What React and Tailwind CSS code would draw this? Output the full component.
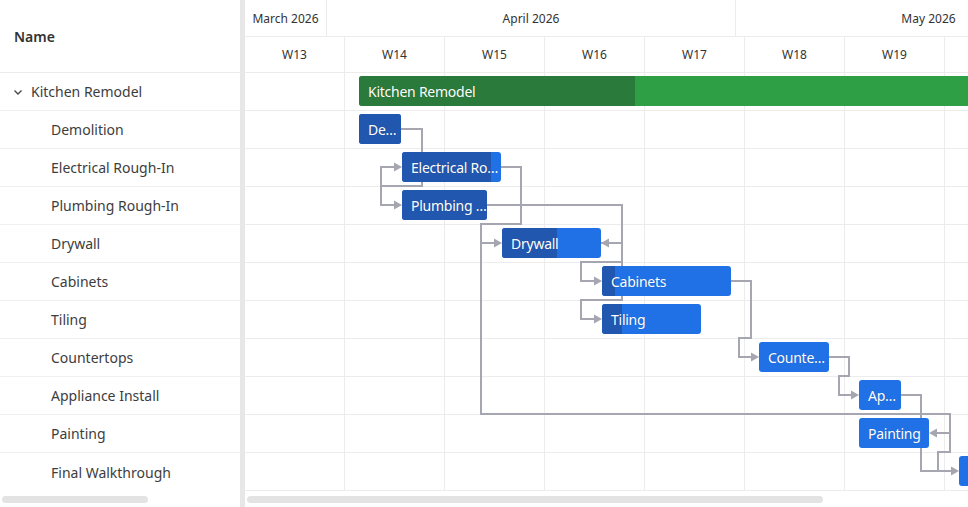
import { Fragment } from 'react'

const ORIGIN_X = 245
const ROW_H = 38

const rows = [
  { name: 'Kitchen Remodel', parent: true },
  { name: 'Demolition' },
  { name: 'Electrical Rough-In' },
  { name: 'Plumbing Rough-In' },
  { name: 'Drywall' },
  { name: 'Cabinets' },
  { name: 'Tiling' },
  { name: 'Countertops' },
  { name: 'Appliance Install' },
  { name: 'Painting' },
  { name: 'Final Walkthrough' },
]

// x / width in page pixels, progress in px from bar start
const bars = [
  { label: 'Kitchen Remodel', x: 359, w: 800, progress: 276, summary: true },
  { label: 'De…', x: 359, w: 42, progress: 42 },
  { label: 'Electrical Ro…', x: 402, w: 99, progress: 89 },
  { label: 'Plumbing …', x: 402, w: 85, progress: 85 },
  { label: 'Drywall', x: 502, w: 99, progress: 55 },
  { label: 'Cabinets', x: 602, w: 129, progress: 13 },
  { label: 'Tiling', x: 602, w: 99, progress: 20 },
  { label: 'Counte…', x: 759, w: 70, progress: 0 },
  { label: 'Ap…', x: 859, w: 42, progress: 0 },
  { label: 'Painting', x: 859, w: 70, progress: 0 },
  { label: '', x: 959, w: 42, progress: 0 },
]

const months = [
  { label: 'March 2026', w: 82 },
  { label: 'April 2026', w: 409 },
  { label: 'May 2026', w: 386 },
]

// last week column runs past the right edge, its label is out of view
const weeks = ['W13', 'W14', 'W15', 'W16', 'W17', 'W18', 'W19', '']

// connector lines, page coordinates
const links = [
  'M401 129 H422 V186 H381 V167 H396',
  'M381 186 V205 H396',
  'M501 167 H521 V224 H481 V243 H496',
  'M481 224 V414 H950 V433 H935',
  'M487 205 H622 V243 H607',
  'M601 243 H622 V262 H581 V281 H596',
  'M622 262 V300 H581 V319 H596',
  'M731 281 H751 V338 H739 V357 H753',
  'M829 357 H849 V376 H839 V395 H853',
  'M901 395 H921 V471 H953',
  'M950 433 V452 H938 V471',
]

const arrowsRight = [
  [402, 167], [402, 205], [502, 243], [602, 281], [602, 319], [759, 357], [859, 395], [959, 471],
]
const arrowsLeft = [
  [601, 243], [929, 433],
]

function Chevron() {
  return (
    <svg width="10" height="10" viewBox="0 0 10 10" className="text-[#444]">
      <path d="M1.5 3.5 L5 7 L8.5 3.5" fill="none" stroke="currentColor" strokeWidth="1.3" />
    </svg>
  )
}

function Bar({ bar, row }) {
  const light = bar.summary ? 'bg-[#2f9f46]' : 'bg-[#2071e6]'
  const dark = bar.summary ? 'bg-[#2a7a3b]' : 'bg-[#2257b0]'
  return (
    <div
      className={`absolute h-[30px] rounded-[3px] overflow-hidden ${light}`}
      style={{ left: bar.x - ORIGIN_X, top: row * ROW_H + 3, width: bar.w }}
    >
      <div className={`absolute inset-y-0 left-0 ${dark}`} style={{ width: bar.progress }} />
      <span className="relative flex h-full items-center pl-[9px] text-[14px] tracking-[-0.25px] text-white whitespace-nowrap [text-shadow:0_0_1px_rgba(0,0,0,0.25)]">
        {bar.label}
      </span>
    </div>
  )
}

export default function App() {
  return (
    <div className="flex h-[507px] w-[968px] overflow-hidden bg-white font-['Noto_Sans',sans-serif] text-[#333]">
      {/* grid side */}
      <div className="flex w-[240px] shrink-0 flex-col">
        <div className="flex h-[73px] items-center border-b border-[#ececec] px-[14px] text-[14px] font-semibold text-[#333]">
          Name
        </div>
        {rows.map((r) => (
          <div
            key={r.name}
            className={`flex h-[38px] items-center border-b border-[#f0f0f0] text-[14px] text-[#3d3d3d] ${r.parent ? 'pl-[13px]' : 'pl-[51px]'} ${r.name === 'Final Walkthrough' ? 'border-b-0' : ''}`}
          >
            {r.parent && (
              <span className="mr-[8px] flex items-center">
                <Chevron />
              </span>
            )}
            {r.name}
          </div>
        ))}
        <div className="flex flex-1 items-center px-[2px]">
          <div className="h-[7px] w-[146px] rounded-full bg-[#e3e3e3]" />
        </div>
      </div>

      {/* splitter */}
      <div className="w-[5px] shrink-0 bg-[#e7e7e7]" />

      {/* timeline */}
      <div className="flex min-w-0 flex-1 flex-col overflow-hidden">
        <div className="flex h-[37px] shrink-0 border-b border-[#ececec]">
          {months.map((m) => (
            <div
              key={m.label}
              className="flex shrink-0 items-center justify-center border-r border-[#ececec] pt-px text-[12px] text-[#333]"
              style={{ width: m.w }}
            >
              {m.label}
            </div>
          ))}
        </div>
        <div className="flex h-[36px] shrink-0 border-b border-[#ececec]">
          {weeks.map((w, i) => (
            <div
              key={i}
              className="flex w-[100px] shrink-0 items-center justify-center border-r border-[#ececec] text-[12px] text-[#333]"
            >
              {w}
            </div>
          ))}
        </div>

        <div className="relative h-[418px] shrink-0">
          {/* grid lines */}
          <div className="absolute inset-0 flex">
            {weeks.map((w, i) => (
              <div key={i} className="h-full w-[100px] shrink-0 border-r border-[#ececec]" />
            ))}
          </div>
          <div className="absolute inset-0 flex flex-col">
            {rows.map((r) => (
              <div key={r.name} className="h-[38px] shrink-0 border-b border-[#ececec]" />
            ))}
          </div>

          <svg
            className="absolute left-0 top-0"
            width="723"
            height="418"
            viewBox="245 73 723 418"
          >
            {links.map((d, i) => (
              <path key={i} d={d} fill="none" stroke="#a6a6b0" strokeWidth="2" />
            ))}
            {arrowsRight.map(([x, y], i) => (
              <path key={'r' + i} d={`M${x} ${y} L${x - 8} ${y - 4.5} L${x - 8} ${y + 4.5} Z`} fill="#a6a6b0" />
            ))}
            {arrowsLeft.map(([x, y], i) => (
              <path key={'l' + i} d={`M${x} ${y} L${x + 8} ${y - 4.5} L${x + 8} ${y + 4.5} Z`} fill="#a6a6b0" />
            ))}
          </svg>

          {bars.map((b, i) => (
            <Fragment key={i}>
              <Bar bar={b} row={i} />
            </Fragment>
          ))}
        </div>

        <div className="flex flex-1 items-center px-[2px]">
          <div className="h-[7px] w-[576px] rounded-full bg-[#e3e3e3]" />
        </div>
      </div>
    </div>
  )
}
